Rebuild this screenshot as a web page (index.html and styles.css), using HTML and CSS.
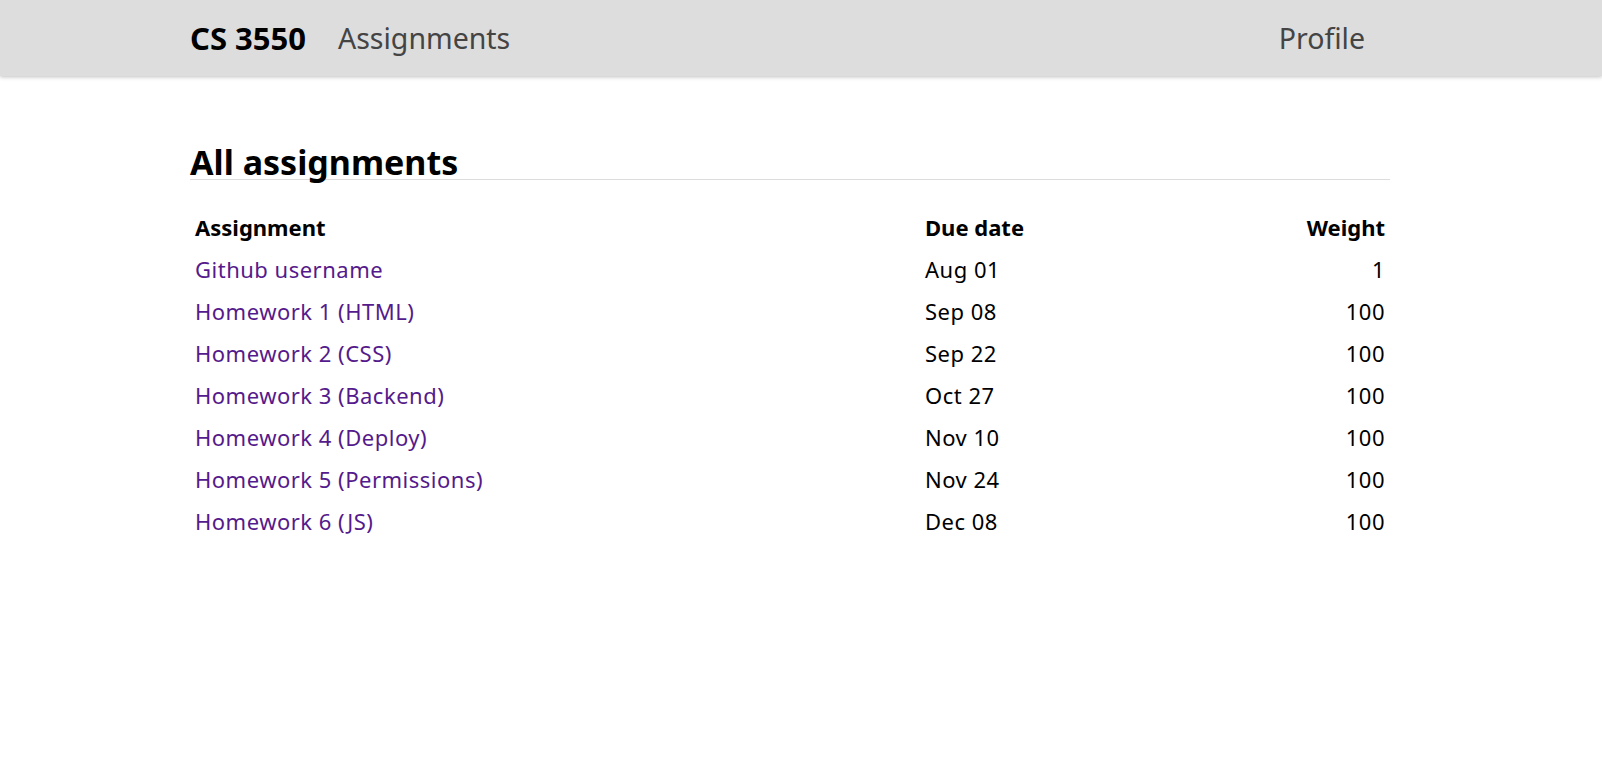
FILE: index.html
```html
<!DOCTYPE html>
<html lang="en">
<head>
<meta charset="utf-8">
<title>CS 3550 Assignments</title>
<link rel="stylesheet" href="styles.css">
</head>
<body>
<header class="topbar">
  <nav class="nav">
    <a class="brand" href="#">CS 3550</a>
    <a class="nav-link" href="#">Assignments</a>
    <a class="nav-link profile" href="#">Profile</a>
  </nav>
</header>
<main class="content">
  <h1 class="title">All assignments</h1>
  <table class="assignments">
    <colgroup>
      <col class="c-name">
      <col class="c-due">
      <col class="c-weight">
    </colgroup>
    <thead>
      <tr><th>Assignment</th><th>Due date</th><th class="num">Weight</th></tr>
    </thead>
    <tbody>
      <tr><td><a href="#">Github username</a></td><td>Aug 01</td><td class="num">1</td></tr>
      <tr><td><a href="#">Homework 1 (HTML)</a></td><td>Sep 08</td><td class="num">100</td></tr>
      <tr><td><a href="#">Homework 2 (CSS)</a></td><td>Sep 22</td><td class="num">100</td></tr>
      <tr><td><a href="#">Homework 3 (Backend)</a></td><td>Oct 27</td><td class="num">100</td></tr>
      <tr><td><a href="#">Homework 4 (Deploy)</a></td><td>Nov 10</td><td class="num">100</td></tr>
      <tr><td><a href="#">Homework 5 (Permissions)</a></td><td>Nov 24</td><td class="num">100</td></tr>
      <tr><td><a href="#">Homework 6 (JS)</a></td><td>Dec 08</td><td class="num">100</td></tr>
    </tbody>
  </table>
</main>
</body>
</html>
```

FILE: styles.css
```css
html, body {
  margin: 0;
  padding: 0;
  background: #fff;
}
body {
  font-family: "Noto Sans", "Open Sans", sans-serif;
  font-size: 22px;
  color: #000;
}
.topbar {
  background: #dddddd;
  height: 76px;
  box-shadow: 0 1px 4px rgba(0, 0, 0, 0.25);
}
.nav {
  box-sizing: border-box;
  width: 1200px;
  margin-left: 190px;
  height: 76px;
  padding-right: 25px;
  display: flex;
  align-items: center;
  font-size: 30px;
}
.nav a {
  text-decoration: none;
}
.brand {
  color: #000;
  font-weight: 700;
  font-size: 31px;
}
.nav-link {
  color: #444;
  margin-left: 32px;
  font-size: 28.5px;
}
.profile {
  margin-left: auto;
}
.content {
  width: 1200px;
  margin-left: 190px;
}
.title {
  margin: 69px 0 0 0;
  font-size: 34px;
  line-height: 1;
  font-weight: 700;
  border-bottom: 1px solid #dcdcdc;
}
.assignments {
  width: 100%;
  border-collapse: collapse;
  margin-top: 26px;
  table-layout: fixed;
}
.c-name { width: 730px; }
.c-due { width: 310px; }
.c-weight { width: 160px; }
.assignments th,
.assignments td {
  padding: 4px 5px 4px 5px;
  line-height: 34px;
  text-align: left;
  font-weight: 400;
}
.assignments td {
  letter-spacing: 0.5px;
}
.assignments th {
  font-weight: 700;
}
.assignments .num {
  text-align: right;
}
.assignments a {
  color: #551a8b;
  text-decoration: none;
}
```
